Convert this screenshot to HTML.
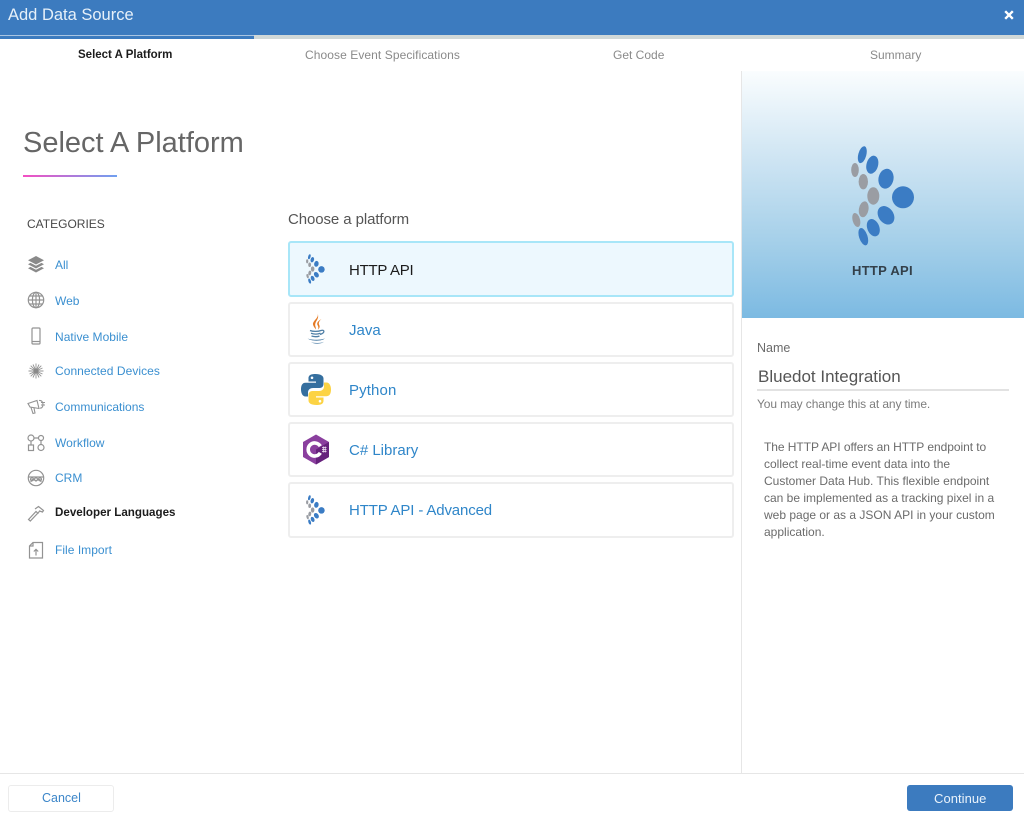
<!DOCTYPE html>
<html lang="en"><head><meta charset="utf-8"><title>Add Data Source</title>
<style>
html,body{margin:0;padding:0;background:#fff}
#p{position:relative;width:1024px;height:818px;overflow:hidden;background:#fff;font-family:"Liberation Sans",sans-serif}
#p div,#p span.t,#p svg{position:absolute}
.t{white-space:nowrap;display:block}
.tab{top:48px;font-size:12px;line-height:14px;color:#8a8a8a}
.cat{left:55px;font-size:12px;line-height:14px;color:#3a8fd0}
.ic{left:26px;width:20px;height:20px;fill:none;stroke:#939393;stroke-width:1.2}
.card{left:288px;width:442px;height:51px;border:2px solid #eee;border-radius:3px;background:#fff}
.lbl{left:349px;font-size:15px;line-height:18px;color:#2f86c9}
.pl{left:764px;font-size:12px;line-height:17px;color:#6b6b6b}
</style></head><body>
<div id="p">
<svg width="0" height="0" style="left:0;top:0"><defs>
<symbol id="bd" viewBox="851 146 64 100">
<circle cx="903" cy="197.3" r="11" fill="#3b7cc4"/>
<ellipse cx="886" cy="178.7" rx="7.5" ry="10" transform="rotate(12 886 178.7)" fill="#3b7cc4"/>
<ellipse cx="872.3" cy="164.7" rx="5.8" ry="9.2" transform="rotate(15 872.3 164.7)" fill="#3b7cc4"/>
<ellipse cx="862.3" cy="154.7" rx="4" ry="8.7" transform="rotate(15 862.3 154.7)" fill="#3b7cc4"/>
<ellipse cx="855" cy="170" rx="3.8" ry="7" fill="#9a9da3"/>
<ellipse cx="863.3" cy="181.7" rx="4.7" ry="7.7" fill="#9a9da3"/>
<ellipse cx="873.3" cy="196" rx="6" ry="8.7" fill="#9a9da3"/>
<ellipse cx="863.7" cy="209.3" rx="4.8" ry="8" transform="rotate(10 863.700 209.3)" fill="#9a9da3"/>
<ellipse cx="856.3" cy="220" rx="3.7" ry="7.2" transform="rotate(-15 856.3 220)" fill="#9a9da3"/>
<ellipse cx="886" cy="215.3" rx="7.5" ry="10" transform="rotate(-35 886 215.3)" fill="#3b7cc4"/>
<ellipse cx="873.3" cy="227.7" rx="6" ry="9" transform="rotate(-22 873.3 227.7)" fill="#3b7cc4"/>
<ellipse cx="863.3" cy="236.7" rx="4.2" ry="9" transform="rotate(-18 863.3 236.7)" fill="#3b7cc4"/>
</symbol></defs></svg>

<div style="left:0;top:0;width:1024px;height:35px;background:#3c7bbf"></div>
<div style="left:0;top:35px;width:254px;height:1px;background:#a9c5e2"></div>
<div style="left:0;top:36px;width:254px;height:3px;background:#3c7bbf"></div>
<div style="left:254px;top:35px;width:770px;height:4px;background:#d0d8d8"></div>
<span class="t" style="left:8px;top:5px;font-size:16.5px;line-height:20px;color:#e6f0f9">Add Data Source</span>
<svg style="left:1003px;top:9px" width="12" height="12" viewBox="0 0 12 12"><path d="M2.200 2.200L9.800 9.800M9.800 2.200L2.200 9.800" stroke="#fff" stroke-width="2.400"/></svg>

<span class="t tab" style="left:78px;color:#1c1c1c;font-weight:bold;font-size:11.5px">Select A Platform</span>
<span class="t tab" style="left:305px;letter-spacing:.08px">Choose Event Specifications</span>
<span class="t tab" style="left:613px">Get Code</span>
<span class="t tab" style="left:870px">Summary</span>

<span class="t" style="left:23px;top:126px;font-size:29px;line-height:34px;color:#666">Select A Platform</span>
<div style="left:23px;top:175px;width:94px;height:2px;background:linear-gradient(90deg,#f44fc2,#6fa0f0)"></div>

<span class="t" style="left:27px;top:217px;font-size:12px;line-height:15px;color:#484848">CATEGORIES</span>

<svg class="ic" style="top:254px" viewBox="0 0 20 20"><path d="M10 2L18 6.3 10 10.5 2 6.3Z" fill="#8a8a8a" stroke="none"/><path d="M4.5 8.9L2 10.2 10 14.5 18 10.2 15.5 8.9 10 11.8Z" fill="#8a8a8a" stroke="none"/><path d="M4.5 12.9L2 14.2 10 18.5 18 14.2 15.5 12.9 10 15.8Z" fill="#8a8a8a" stroke="none"/></svg>
<span class="t cat" style="top:258px">All</span>
<svg class="ic" style="top:290px" viewBox="0 0 20 20"><circle cx="10" cy="10" r="7.7"/><ellipse cx="10" cy="10" rx="3.6" ry="7.7"/><path d="M2.3 10H17.7M3.4 6H16.6M3.4 14H16.6M10 2.3V17.7"/></svg>
<span class="t cat" style="top:294px">Web</span>
<svg class="ic" style="top:326px" viewBox="0 0 20 20"><rect x="6" y="2" width="8" height="16" rx="1"/><path d="M6 15.5H14"/></svg>
<span class="t cat" style="top:330px;letter-spacing:.03px">Native Mobile</span>
<svg class="ic" style="top:361px" viewBox="0 0 20 20"><path d="M10 2.5V17.5M2.5 10H17.5M4.7 4.7L15.3 15.3M15.3 4.7L4.7 15.3M7 3.5L13 16.5M13 3.5L7 16.5M3.5 7L16.5 13M3.5 13L16.5 7" stroke-width=".9"/><circle cx="10" cy="10" r="2.5" fill="#8a8a8a" stroke="none"/></svg>
<span class="t cat" style="top:364px;letter-spacing:.05px">Connected Devices</span>
<svg class="ic" style="top:397px" viewBox="0 0 20 20"><path d="M2 6.5L11 3.5 13 11.5 4 10ZM5 10.5L7 16.5 9 16 8 11M13 3.5C15.5 3 17 5 17 7.5S15.5 11.500 14 11M15 5.500H19M15 8H19" stroke-width="1.100"/></svg>
<span class="t cat" style="top:400px;letter-spacing:0">Communications</span>
<svg class="ic" style="top:433px" viewBox="0 0 20 20"><circle cx="5" cy="5" r="3"/><rect x="2.500" y="12" width="5" height="5.500"/><circle cx="15" cy="5" r="2.500"/><circle cx="15" cy="14.500" r="3"/><path d="M8 5H12.500M5 8V12M15 7.500V11.500"/></svg>
<span class="t cat" style="top:436px;letter-spacing:.05px">Workflow</span>
<svg class="ic" style="top:468px" viewBox="0 0 20 20"><circle cx="10" cy="10" r="7.700"/><path d="M2.500 9H17.500M5 14C5 11 8 11 10 13 12 11 15 11 15 14"/><circle cx="6" cy="11.300" r="1.500"/><circle cx="10" cy="11.300" r="1.500"/><circle cx="14" cy="11.300" r="1.500"/></svg>
<span class="t cat" style="top:471px">CRM</span>
<svg class="ic" style="top:503px" viewBox="0 0 20 20"><path d="M2.500 16.500L10 8.500 11.800 10.200 4.300 18ZM9 6L12.500 3.500 17.500 7.500 16.500 9 13.500 8 12 10.500"/></svg>
<span class="t cat" style="top:506px;color:#1c1c1c;font-weight:bold;font-size:11.6px">Developer Languages</span>
<svg class="ic" style="top:540px" viewBox="0 0 20 20"><path d="M7 2.500H16.500V18H3.500V6ZM7 2.500V6H3.500M10 15.500V9.500M7.800 11.500L10 9.300 12.200 11.500"/></svg>
<span class="t cat" style="top:543px;letter-spacing:.03px">File Import</span>

<span class="t" style="left:288px;top:211px;font-size:15px;line-height:18px;color:#555;letter-spacing:-.09px">Choose a platform</span>

<div class="card" style="top:241px;height:52px;background:#edf8fe;border-color:#a8e6f8"></div>
<div class="card" style="top:302px"></div>
<div class="card" style="top:362px"></div>
<div class="card" style="top:422px"></div>
<div class="card" style="top:482px;height:52px"></div>

<svg style="left:306px;top:254px" width="19" height="30"><use href="#bd"/></svg>
<svg style="left:306px;top:495px" width="19" height="30"><use href="#bd"/></svg>

<svg style="left:304px;top:313px" width="25" height="32" viewBox="0 0 25 32">
<path d="M13.500 0C15.500 5 8.500 7.500 9 11.500 9.300 13.500 11 15 12 16.500 12 14 10.500 12.500 11.500 10 12.500 7 15.500 5 13.500 0Z" fill="#e57a24"/>
<path d="M17.500 6C14 8 12.500 10 13.500 12 14.200 13.500 14.800 14.500 14 16.500 16.500 14.500 15.500 12.500 15 11.500 14.500 10 15 8 17.500 6Z" fill="#e57a24"/>
<path d="M6 17.500C9 18.700 14 18.700 17 17.500M7 20.300C10 21.300 13.500 21.300 16.500 20.300M7.500 23C10 23.800 13.500 23.800 15.500 23M17 17.500C20.500 16.300 21.500 19.800 16 21.500" fill="none" stroke="#4f7fa6" stroke-width="1.300"/>
<path d="M3.500 25.300C6 27.300 18 27.300 21 25.300 19 28.500 6 28.500 3.500 25.300Z" fill="#4f7fa6"/>
<path d="M7 29C11 30.500 17 30.200 20 28.800 17 31.500 10 31.500 7 29Z" fill="#6f97b8"/>
</svg>

<svg style="left:300px;top:373px" width="32" height="33" viewBox="0 0 32 33">
<path d="M15.500 1C9 1 8.500 3.500 8.500 5.500V8.500H16V9.800H5.500C2 9.800 1 13 1 16.500S2.500 23.500 5.500 23.500H8V19.500C8 16.500 10.500 15 13 15H19.500C21.800 15 23.500 13.500 23.500 11V5.500C23.500 3 21 1 15.500 1Z" fill="#356f9f"/>
<circle cx="12" cy="4.800" r="1.300" fill="#fff"/>
<path d="M16.500 32C23 32 23.500 29.500 23.500 27.500V24.500H16V23.200H26.500C30 23.200 31 20 31 16.500S29.500 9.500 26.500 9.500H24V13.500C24 16.500 21.500 18 19 18H12.500C10.200 18 8.500 19.500 8.500 22V27.500C8.500 30 11 32 16.500 32Z" fill="#fcd344"/>
<circle cx="20" cy="28.200" r="1.300" fill="#fff"/>
</svg>

<svg style="left:302px;top:434px" width="28" height="31" viewBox="0 0 28 31">
<path d="M14 .5L27 8V23L14 30.500 1 23V8Z" fill="#8a3f9e"/>
<path d="M14 30.500L27 23V8L14 15.500Z" fill="#66227c"/>
<path d="M18.300 12.200A6.500 6.500 0 1 0 18.300 18.800" fill="none" stroke="#fff" stroke-width="3.600"/>
<path d="M20 13.500H24.500M20 15.500H24.500M20 17.500H24.500M21.300 12.500V18.500M23.200 12.500V18.500" stroke="#f3e6f6" stroke-width=".8"/>
</svg>

<span class="t lbl" style="top:262px;color:#1c1c1c;letter-spacing:-.25px">HTTP API</span>
<span class="t lbl" style="top:322px">Java</span>
<span class="t lbl" style="top:382px;letter-spacing:.12px">Python</span>
<span class="t lbl" style="top:442px">C# Library</span>
<span class="t lbl" style="top:502px;letter-spacing:-.14px">HTTP API - Advanced</span>

<div style="left:741px;top:71px;width:1px;height:702px;background:#e6e6e6"></div>
<div style="left:742px;top:71px;width:282px;height:247px;background:linear-gradient(180deg,#fafdfe 0%,#cfe5f3 35%,#a4cfe9 70%,#7cbae2 100%)"></div>
<svg style="left:851px;top:146px" width="64" height="100"><use href="#bd"/></svg>
<span class="t" style="left:852px;top:263px;font-size:13px;line-height:15px;font-weight:bold;color:#33404a;letter-spacing:.3px">HTTP API</span>

<span class="t" style="left:757px;top:341px;font-size:12.5px;line-height:15px;color:#6b6b6b">Name</span>
<span class="t" style="left:758px;top:367px;font-size:17px;line-height:19px;color:#555">Bluedot Integration</span>
<div style="left:757px;top:389px;width:252px;height:2px;background:#e2e2e2"></div>
<span class="t" style="left:757px;top:397px;font-size:12px;line-height:14px;color:#7d7d7d;letter-spacing:-.1px">You may change this at any time.</span>

<span class="t pl" style="top:439px;letter-spacing:-.05px">The HTTP API offers an HTTP endpoint to</span>
<span class="t pl" style="top:456px">collect real-time event data into the</span>
<span class="t pl" style="top:473px">Customer Data Hub. This flexible endpoint</span>
<span class="t pl" style="top:490px">can be implemented as a tracking pixel in a</span>
<span class="t pl" style="top:507px">web page or as a JSON API in your custom</span>
<span class="t pl" style="top:524px">application.</span>

<div style="left:0;top:773px;width:1024px;height:1px;background:#e6e6e6"></div>
<div style="left:8px;top:785px;width:104px;height:25px;border:1px solid #ececec;border-radius:3px;background:#fff"></div>
<span class="t" style="left:42px;top:791px;font-size:12.5px;line-height:15px;color:#3c86c9">Cancel</span>
<div style="left:907px;top:785px;width:106px;height:26px;border-radius:3px;background:#3c7bbf"></div>
<span class="t" style="left:934px;top:791px;font-size:13px;line-height:15px;color:#eaf3fb;letter-spacing:.05px">Continue</span>
</div>
</body></html>
